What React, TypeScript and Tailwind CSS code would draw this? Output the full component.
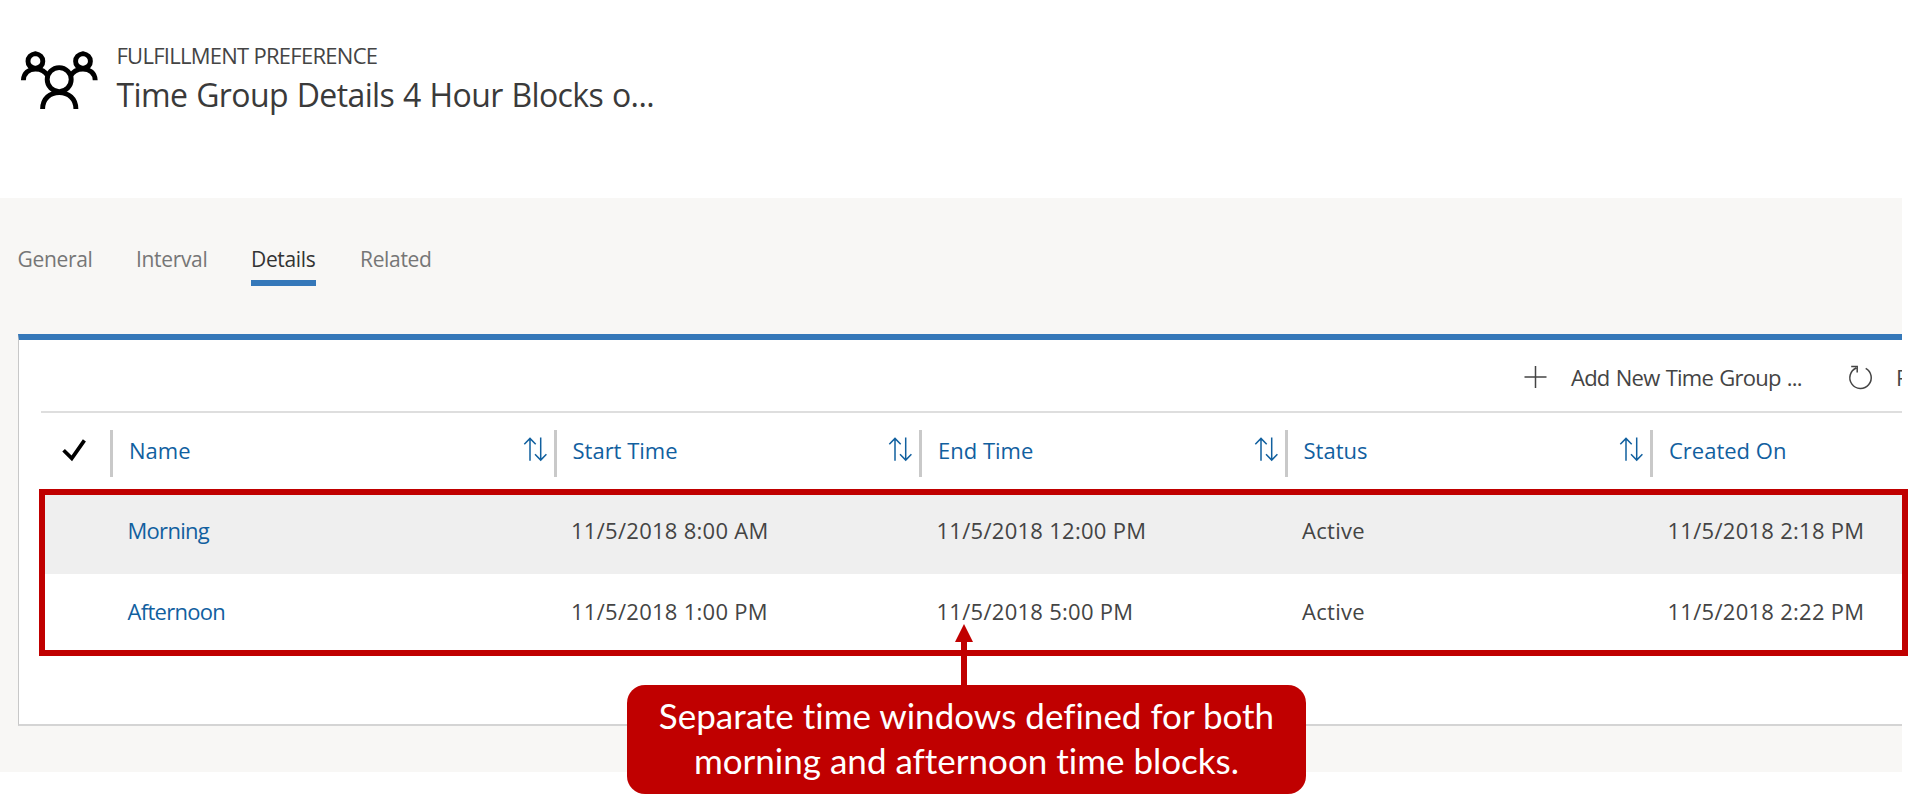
import React from 'react';

function GroupIcon() {
  return (
    <svg className="block shrink-0" width="82" height="64" viewBox="18 48 82 64" fill="none" stroke="#000" strokeWidth="4.9">
      <circle cx="59.2" cy="79.6" r="12" />
      <path d="M42.6 109C42.6 98.5 50 92.6 59.2 92.6S75.9 98.5 75.9 109" />
      <path d="M35.4 53.6C40 54.2 42.8 57.5 42.8 61.2C42.8 65 40 67.6 35.4 68.3C30.8 67.6 28 65 28 61.2C28 57.5 30.8 54.2 35.4 53.6Z" />
      <path d="M23.4 80.3C23.6 73 29 69.1 35.4 69.1C41 69.1 45.5 71.5 47.8 76" />
      <path d="M83 53.6C87.6 54.2 90.4 57.5 90.4 61.2C90.4 65 87.6 67.6 83 68.3C78.4 67.6 75.6 65 75.6 61.2C75.6 57.5 78.4 54.2 83 53.6Z" />
      <path d="M95.2 80.3C95 73 89.5 69.1 83 69.1C77.4 69.1 72.9 71.5 70.6 76" />
    </svg>
  );
}

function SortIcon() {
  return (
    <svg className="mt-[7px] mr-[7px] block shrink-0" width="24" height="25" viewBox="0 0 24 25" fill="none" stroke="#11609f" strokeWidth="1.5">
      <path d="M7 23.7V1.5M1.3 7.2L7 1.4L12.7 7.2M17.7 0.5V22.8M12 17.3L17.7 23.1L23.4 17.3" />
    </svg>
  );
}

function CheckIcon() {
  return (
    <svg className="block" width="24" height="24" viewBox="0 0 24 24" fill="none" stroke="#000" strokeWidth="3.7">
      <path d="M1.6 12.2L9.8 20.4L22.4 2.4" />
    </svg>
  );
}

const tabs = ['General', 'Interval', 'Details', 'Related'];
const columns = ['Name', 'Start Time', 'End Time', 'Status', 'Created On'];
const rows = [
  { name: 'Morning', start: '11/5/2018 8:00 AM', end: '11/5/2018 12:00 PM', status: 'Active', created: '11/5/2018 2:18 PM', shade: true },
  { name: 'Afternoon', start: '11/5/2018 1:00 PM', end: '11/5/2018 5:00 PM', status: 'Active', created: '11/5/2018 2:22 PM', shade: false },
];

export default function App() {
  return (
    <div className="relative h-[807px] w-[1908px] overflow-hidden bg-white font-['Open_Sans','Noto_Sans',sans-serif] text-[22px] leading-[30px] font-normal whitespace-nowrap text-[#444]">
      <header className="flex h-[198px] pl-[18px]">
        <div className="pt-[48px]">
          <GroupIcon />
        </div>
        <div className="pt-[40px] pl-[16.5px]">
          <div className="tracking-[-0.73px]">FULFILLMENT PREFERENCE</div>
          <h1 className="mt-[3px] text-[32px] leading-[44px] font-normal tracking-[-0.61px] text-[#3a3a3a] [word-spacing:1.1px]">Time Group Details 4 Hour Blocks o...</h1>
        </div>
      </header>

      <main className="h-[574px] w-[1902px] bg-[#f8f7f5] pt-[47px]">
        <nav className="grid h-[89px] grid-cols-[118.5px_115px_109px_auto] justify-start pl-[17.5px] text-[21px] leading-[28px] tracking-[-0.33px]">
          {tabs.map((tab) => (
            <div key={tab} className={tab === 'Details' ? 'text-[#333]' : 'text-[#767676]'}>
              {tab}
              {tab === 'Details' && <div className="mt-[7px] h-[6px] w-[65px] bg-[#3578b9]" />}
            </div>
          ))}
        </nav>

        <section className="ml-[18px] h-[392px] border-t-[6px] border-b-2 border-l border-t-[#3578b9] border-b-[#d4d4d4] border-l-[#c8c8c8] bg-white">
          <div className="ml-[22px] flex h-[73px] items-start overflow-hidden border-b-2 border-[#dedede] pl-[1482px]">
            <svg className="mt-[25px] block shrink-0" width="24" height="24" viewBox="0 0 24 24" fill="none" stroke="#444" strokeWidth="1.5">
              <path d="M12.5 1V23M1.5 12H23.5" />
            </svg>
            <div className="mt-[22px] w-[300.5px] shrink-0 pl-[24px] tracking-[-0.75px] [word-spacing:1.2px]">Add New Time Group ...</div>
            <svg className="mt-[24px] block shrink-0" width="25" height="26" viewBox="0 0 25 26" fill="none" stroke="#444" strokeWidth="1.5">
              <path d="M17.7 4.4A10.7 10.7 0 1 1 8.2 4M3.2 2.4H9.2V8.4" />
            </svg>
            <div className="mt-[22px] shrink-0 pl-[23.5px]">Refresh</div>
          </div>

          <div className="ml-[22px] grid h-[76px] grid-cols-[69px_443.5px_365.5px_365.5px_365.5px_1fr] items-start pt-[17px] text-[#11609f]">
            <div className="pt-[8px] pl-[20.5px]">
              <CheckIcon />
            </div>
            {columns.map((column, i) => (
              <div key={column} className="flex h-[47px] justify-between border-l-[3px] border-[#c9c9c9] pl-[16px]">
                <span className="pt-[5px]">{column}</span>
                {i < 4 && <SortIcon />}
              </div>
            ))}
          </div>

          {rows.map((row) => (
            <div
              key={row.name}
              className={`ml-[22px] grid grid-cols-[86.5px_443.5px_365.5px_365.5px_365.5px_1fr] items-start tracking-[0.28px] ${row.shade ? 'h-[85px] bg-[#efefef] pt-[26px]' : 'h-[81px] pt-[22px]'}`}
            >
              <span />
              <span className="tracking-[-0.7px] text-[#11609f]">{row.name}</span>
              <span>{row.start}</span>
              <span>{row.end}</span>
              <span>{row.status}</span>
              <span>{row.created}</span>
            </div>
          ))}
        </section>
      </main>

      <div className="absolute top-[489px] left-[39px] h-[167px] w-[1869px] border-6 border-[#c00000]" />
      <svg className="absolute top-[624px] left-[954px]" width="20" height="64" viewBox="0 0 20 64" fill="#c00000">
        <path d="M10 0L19 18H13V64H7V18H1Z" />
      </svg>
      <div className="absolute top-[685px] left-[627px] flex h-[109px] w-[679px] flex-col items-center rounded-[18px] bg-[#c00000] pt-[8px] font-['Lato',sans-serif] text-[35px] leading-[45px] font-normal text-white [font-variant-ligatures:none]">
        <span>Separate time windows defined for both</span>
        <span>morning and afternoon time blocks.</span>
      </div>
    </div>
  );
}
